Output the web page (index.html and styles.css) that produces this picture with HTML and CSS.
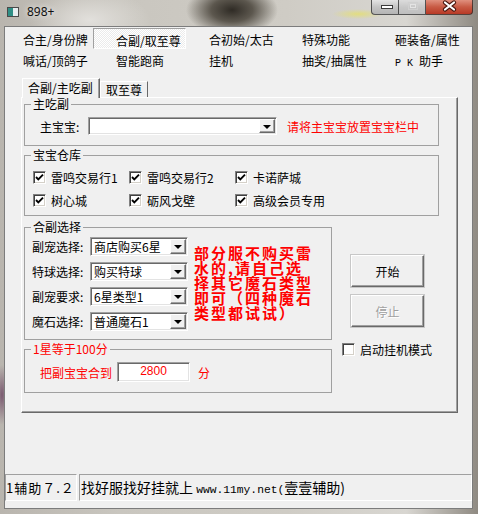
FILE: index.html
```html
<!DOCTYPE html>
<html lang="zh-CN">
<head>
  <meta charset="UTF-8">
  <title>898+</title>
  <link rel="stylesheet" href="styles.css">
</head>
<body>
  <div class="titlebar">
    <div class="title"><span class="app-icon"></span>898+</div>
    <div class="caption">
      <span class="cap min"><svg width="28" height="14"><rect x="9.5" y="5.5" width="11" height="3" fill="#fff" stroke="#3a3a3a"/></svg></span>
      <span class="cap max"><svg width="27" height="14"><rect x="9.5" y="2.5" width="9" height="7" fill="none" stroke="#d0d0d0"/><rect x="11.5" y="4.5" width="5" height="3" fill="none" stroke="#e4e4e4"/></svg></span>
      <span class="cap close"><svg width="47" height="14"><path d="M19 2.5 L28 9.5 M28 2.5 L19 9.5" stroke="#4a1810" stroke-width="4.2" stroke-linecap="round"/><path d="M19 2.5 L28 9.5 M28 2.5 L19 9.5" stroke="#fff" stroke-width="2.2" stroke-linecap="round"/></svg></span>
    </div>
  </div>

  <div class="client">
    <div class="menu-tabs">
      <span>合主/身份牌</span>
      <span class="on">合副/取至尊</span>
      <span>合初始/太古</span>
      <span>特殊功能</span>
      <span>砸装备/属性</span>
      <span>喊话/顶鸽子</span>
      <span>智能跑商</span>
      <span>挂机</span>
      <span>抽奖/抽属性</span>
      <span><i class="mono">P K </i>助手</span>
    </div>

    <div class="sub-tabs">
      <span class="stab active">合副/主吃副</span>
      <span class="stab">取至尊</span>
    </div>

    <div class="page">
      <fieldset class="grp wide g-main">
        <legend>主吃副</legend>
        <div class="grp-body row">
          <span class="lbl-main">主宝宝:</span>
          <div class="combo combo-main"><span class="val"></span><span class="drop"><i></i></span></div>
          <span class="red hint">请将主宝宝放置宝宝栏中</span>
        </div>
      </fieldset>

      <fieldset class="grp wide g-store">
        <legend>宝宝仓库</legend>
        <div class="grp-body checks">
          <label class="chk"><span class="box on"></span>雷鸣交易行1</label>
          <label class="chk"><span class="box on"></span>雷鸣交易行2</label>
          <label class="chk"><span class="box on"></span>卡诺萨城</label>
          <label class="chk"><span class="box on"></span>树心城</label>
          <label class="chk"><span class="box on"></span>砺风戈壁</label>
          <label class="chk"><span class="box on"></span>高级会员专用</label>
        </div>
      </fieldset>

      <div class="lower">
        <div class="left-col">
          <fieldset class="grp narrow g-pick">
            <legend>合副选择</legend>
            <div class="grp-body pick">
              <div class="pick-grid">
                <span>副宠选择:</span>
                <div class="combo"><span class="val">商店购买6星</span><span class="drop"><i></i></span></div>
                <span>特球选择:</span>
                <div class="combo"><span class="val">购买特球</span><span class="drop"><i></i></span></div>
                <span>副宠要求:</span>
                <div class="combo"><span class="val">6星类型1</span><span class="drop"><i></i></span></div>
                <span>魔石选择:</span>
                <div class="combo"><span class="val">普通魔石1</span><span class="drop"><i></i></span></div>
              </div>
              <div class="note">部分服不购买雷<br>水的,请自己选<br>择其它魔石类型<br>即可（四种魔石<br>类型都试试）</div>
            </div>
          </fieldset>

          <fieldset class="grp narrow g-score">
            <legend class="red">1星等于100分</legend>
            <div class="grp-body row red">
              <span>把副宝宝合到</span>
              <span class="edit">2800</span>
              <span class="unit">分</span>
            </div>
          </fieldset>
        </div>

        <div class="right-col">
          <button class="btn">开始</button>
          <button class="btn off">停止</button>
          <label class="chk idle"><span class="box"></span>启动挂机模式</label>
        </div>
      </div>
    </div>

    <div class="statusbar">
      <span class="panel p-ver">1辅助７.２</span>
      <span class="panel p-msg">找好服找好挂就上 <i class="url">www.11my.net(</i>壹壹辅助)</span>
    </div>
  </div>
</body>
</html>
```

FILE: styles.css
```css
* { box-sizing: border-box; }
html, body { margin: 0; }
body {
  width: 478px; height: 514px; overflow: hidden;
  display: flex; flex-direction: column;
  font-family: "Noto Sans CJK SC", "Noto Sans", sans-serif; font-size: 12px; color: #000;
  background:
    radial-gradient(ellipse 46px 26px at 232px 10px, #2f2b25 0, #5c574e 45%, rgba(110,104,94,0) 100%),
    radial-gradient(ellipse 26px 5px at 358px 14px, #e2dd80 0, rgba(226,221,128,0) 100%),
    radial-gradient(ellipse 8px 30px at 2px 395px, #7a5a70, rgba(122,90,112,0)),
    radial-gradient(ellipse 60px 30px at 90px 20px, #e2e0dc, rgba(226,224,220,0)),
    linear-gradient(90deg, #b9b5ae 0, #c9c6bf 25%, #cfccc5 60%, #d8d6d1 85%, #8f8a82 100%);
}
i { font-style: normal; }

.titlebar { height: 26px; flex: none; display: flex; justify-content: space-between; align-items: flex-start; padding: 0 5px 0 7px; }
.title { height: 22px; display: flex; align-items: center; gap: 8px; font-family: "Noto Sans", sans-serif; font-size: 12px; color: #111; text-shadow: 0 0 6px #fff; }
.app-icon { width: 12px; height: 10px; margin-top: 2px; border: 1px solid #4a4a4a; background: linear-gradient(90deg, #2f8f86 0 55%, #e8eef0 55%); }
.caption { display: flex; }
.cap { height: 15px; display: block; border: 1px solid rgba(40,40,40,.75); border-top: 0; }
.cap svg { display: block; }
.min { width: 28px; border-radius: 0 0 0 4px; background: linear-gradient(#e4e4e4, #c4c4c4 50%, #b4b4b4); }
.max { width: 27px; border-left: 0; background: linear-gradient(#dcdcdc, #c8c8c8 50%, #bebebe); }
.close { width: 47px; border-left: 0; border-radius: 0 0 4px 0; background: linear-gradient(#e0907e, #c85a44 50%, #b83a26); }

.client { flex: 1; margin: 0 5px 5px 4px; background: #f0f0f0; border: 1px solid #7c7c7c; display: flex; flex-direction: column; }

.menu-tabs { display: grid; grid-template-columns: repeat(5, 93px); grid-auto-rows: 21px; margin: 1px 0 0 -5px; }
.menu-tabs span { padding: 2px 0 0 23px; line-height: 19px; white-space: nowrap; }
.menu-tabs .on { padding: 2px 0 0 22px; border: 1px solid; border-color: #a0a0a0 #fff #fff #a0a0a0; background: repeating-conic-gradient(#fff 0 25%, #ebebeb 0 50%) 0 0 / 2px 2px; }
.mono { font-family: "Liberation Mono", monospace; font-size: 10px; }

.sub-tabs { display: flex; align-items: flex-start; height: 20px; margin: 8px 0 0 16px; position: relative; z-index: 1; }
.stab { height: 16px; margin-top: 3px; padding: 0 5px; line-height: 15px; border: 1px solid; border-bottom: 0; border-color: #fff #696969 #696969 #fff; }
.stab.active { height: 20px; margin: 0 0 0 1px; width: 78px; line-height: 18px; background: #f0f0f0; box-shadow: inset -1px 0 0 #a0a0a0; }

.page { width: 437px; height: 316px; margin: -1px 0 0 16px; padding: 0 0 0 2px; border: 1px solid; border-color: #fff #696969 #696969 #fff; box-shadow: inset -1px -1px 0 #a0a0a0; }

.grp { margin: 0; padding: 0; min-width: 0; border: 1px solid #a0a0a0; }
.grp legend { margin-left: 6px; padding: 0 2px; line-height: 14px; font-size: 12px; }
.wide { width: 415px; }
.narrow { width: 308px; }
.g-main { margin-top: -1px; }
.g-store { margin-top: 2px; }
.g-score { margin-top: 2px; }
.red { color: #f00; }

.row { display: flex; align-items: center; }
.g-main .grp-body { padding: 6px 0 10px 15px; }
.lbl-main { width: 48px; }
.hint { margin-left: 10px; }

.combo { display: flex; height: 19px; padding: 1px; background: #fff; border: 1px solid; border-color: #a0a0a0 #fff #fff #a0a0a0; box-shadow: inset 1px 1px 0 #696969, inset -1px -1px 0 #e3e3e3; }
.combo-main { width: 189px; height: 18px; }
.val { flex: 1; padding-left: 2px; line-height: 15px; white-space: nowrap; overflow: hidden; }
.drop { width: 16px; display: flex; align-items: center; justify-content: center; background: #f0f0f0; border: 1px solid; border-color: #fff #696969 #696969 #fff; box-shadow: inset -1px -1px 0 #a0a0a0; }
.drop i { width: 0; height: 0; margin-top: 1px; border-left: 4px solid transparent; border-right: 4px solid transparent; border-top: 4px solid #000; }

.checks { display: grid; grid-template-columns: 96px 106px 1fr; grid-auto-rows: 16px; row-gap: 7px; padding: 7px 0 7px 8px; }
.chk { display: flex; align-items: center; gap: 5px; white-space: nowrap; }
.box { width: 13px; height: 13px; flex: none; background: #fff; border: 1px solid; border-color: #808080 #fff #fff #808080; box-shadow: inset 1px 1px 0 #404040, inset -1px -1px 0 #d4d0c8; }
.box.on { background: #fff url("data:image/svg+xml,%3Csvg xmlns='http://www.w3.org/2000/svg' width='11' height='11'%3E%3Cpath d='M2 5 L4.3 7.3 L9 2.6' fill='none' stroke='%23000' stroke-width='1.9'/%3E%3C/svg%3E") center / 11px 11px no-repeat; }

.lower { display: flex; margin-top: 4px; }
.left-col { width: 308px; }
.pick { display: flex; align-items: flex-start; padding: 3px 0 8px 7px; }
.pick-grid { display: grid; grid-template-columns: 58px 98px; grid-auto-rows: 19px; row-gap: 6px; align-items: center; }
.note { margin: 8px 0 0 6px; color: #f00; font-size: 15px; font-weight: bold; line-height: 15px; letter-spacing: 2px; white-space: nowrap; }

.g-score .grp-body { padding: 6px 0 10px 15px; }
.edit { width: 73px; height: 20px; margin-left: 5px; text-align: center; line-height: 17px; font-family: "Liberation Sans", sans-serif; background: #fff; border: 1px solid; border-color: #a0a0a0 #fff #fff #a0a0a0; box-shadow: inset 1px 1px 0 #696969, inset -1px -1px 0 #e3e3e3; }
.unit { margin-left: 8px; }

.right-col { display: flex; flex-direction: column; padding-left: 10px; }
.btn { width: 73px; height: 32px; margin: 35px 0 0 9px; padding: 0; font: 12px "Noto Sans CJK SC", sans-serif; color: #000; background: #f0f0f0; border: 1px solid; border-color: #fff #696969 #696969 #fff; box-shadow: inset -1px -1px 0 #a0a0a0, 0 0 0 1px #c8c8c8; }
.btn.off { margin-top: 8px; color: #a0a0a0; text-shadow: 1px 1px 0 #fff; }
.idle { margin-top: 14px; }

.statusbar { margin-top: auto; height: 34px; display: flex; gap: 2px; }
.panel { height: 27px; line-height: 25px; white-space: nowrap; overflow: hidden; border: 1px solid; border-color: #a0a0a0 #fff #fff #a0a0a0; }
.p-ver { width: 72px; font-size: 13px; letter-spacing: 1px; }
.p-msg { flex: 1; padding-left: 1px; font-size: 14px; }
.url { font-family: "Liberation Mono", monospace; font-size: 11.3px; }
```
